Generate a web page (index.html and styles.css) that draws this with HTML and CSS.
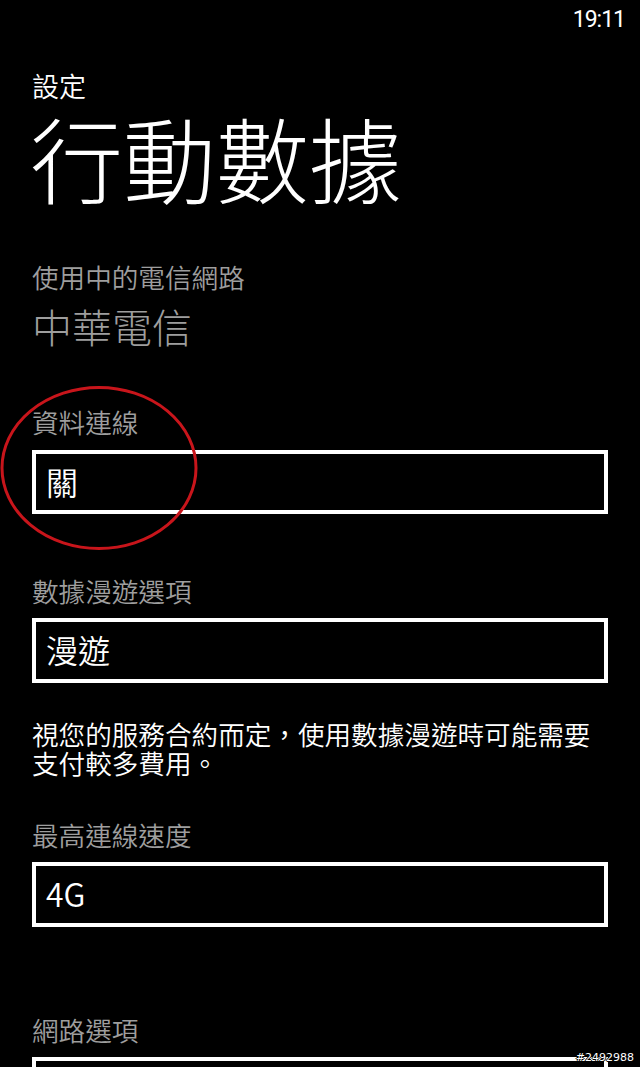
FILE: index.html
```html
<!DOCTYPE html>
<html lang="zh-Hant">
<head>
<meta charset="utf-8">
<title>行動數據</title>
<link rel="stylesheet" href="styles.css">
</head>
<body>
<div class="screen">
  <div class="status"><span class="time">19:11</span></div>
  <div class="page">
    <div class="app-name">設定</div>
    <h1 class="title">行動數據</h1>

    <div class="label label-network">使用中的電信網路</div>
    <div class="carrier">中華電信</div>

    <div class="label label-conn">資料連線</div>
    <div class="picker"><span class="value">關</span></div>

    <div class="label label-gap">數據漫遊選項</div>
    <div class="picker"><span class="value">漫遊</span></div>

    <p class="note">視您的服務合約而定，使用數據漫遊時可能需要支付較多費用。</p>

    <div class="label label-speed">最高連線速度</div>
    <div class="picker"><span class="value">4G</span></div>

    <div class="label label-options">網路選項</div>
    <div class="picker"><span class="value"></span></div>
  </div>

  <svg class="mark" width="200" height="170" viewBox="0 385 200 170" aria-hidden="true">
    <ellipse cx="99" cy="468" rx="97" ry="80.5" fill="none" stroke="#c8151b" stroke-width="3"/>
  </svg>
  <div class="watermark">#2492988</div>
</div>
</body>
</html>
```

FILE: styles.css
```css
html, body {
  margin: 0;
  padding: 0;
  background: #000;
  height: 1067px;
  overflow: hidden;
}

.screen {
  position: relative;
  width: 640px;
  height: 1067px;
  overflow: hidden;
  background: #000;
  color: #fff;
  font-family: "Noto Sans CJK TC", "Noto Sans", sans-serif;
}

.status {
  display: flex;
  justify-content: flex-end;
  padding: 8px 15px 0 0;
  height: 24px;
}

.time {
  font-family: Roboto, "Noto Sans", sans-serif;
  font-size: 23px;
  line-height: 1;
  letter-spacing: -1px;
  font-weight: 400;
  color: #fff;
}

.page {
  padding: 0 32px;
}

.app-name {
  margin-top: 40px;
  font-size: 27px;
  line-height: 1;
  font-weight: 350;
}

.title {
  margin: 11px 0 0 -2px;
  font-size: 93px;
  line-height: 1;
  font-weight: 300;
}

.label {
  font-size: 26.6px;
  line-height: 1;
  font-weight: 350;
  color: #9e9e9e;
}

.label-network { margin-top: 61px; }

.carrier {
  margin-top: 15px;
  font-size: 40px;
  line-height: 1;
  font-weight: 300;
  color: #9e9e9e;
}

.label-conn { margin-top: 63.5px; }
.label-gap { margin-top: 63.5px; }
.label-speed { margin-top: 44px; }
.label-options { margin-top: 90px; }

.picker {
  margin-top: 14px;
  height: 56.5px;
  border: 4px solid #fff;
  padding: 0 10px;
  box-sizing: content-box;
}

.value {
  display: block;
  padding-top: 11px;
  font-size: 32px;
  line-height: 1;
  font-weight: 350;
  color: #fff;
}

.note {
  margin: 36px 0 0 0;
  font-size: 26.6px;
  line-height: 29.5px;
  font-weight: 350;
  color: #fff;
}

.mark {
  position: absolute;
  left: 0;
  top: 385px;
}

.watermark {
  position: absolute;
  right: 6px;
  top: 1052px;
  font-family: "DejaVu Sans", sans-serif;
  font-size: 11px;
  line-height: 12px;
  color: #fff;
  text-shadow: 1px 0 0 #000, -1px 0 0 #000, 0 1px 0 #000, 0 -1px 0 #000;
}
```
